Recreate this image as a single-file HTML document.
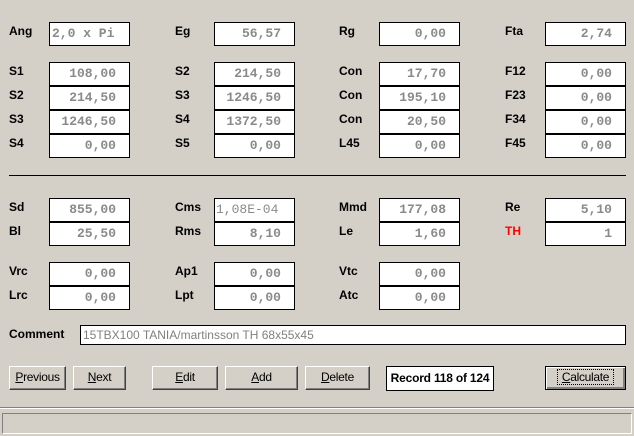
<!DOCTYPE html>
<html><head><style>
body{margin:0;width:634px;height:436px;background:#d4d0c8;position:relative;overflow:hidden;font-family:"Liberation Sans",sans-serif}
.l{position:absolute;font-weight:bold;font-size:12px;color:#000}
.b{position:absolute;box-sizing:border-box;width:81px;height:24px;background:#fff;border:1px solid #000;font-family:"Liberation Mono",monospace;font-size:13px;font-weight:bold;color:#8a8a8a;text-align:right;padding-right:13px;line-height:21px}
.btn{position:absolute;top:366px;height:24px;box-sizing:border-box;background:#d4d0c8;border:1px solid;border-color:#fff #404040 #404040 #fff;box-shadow:inset -1px -1px 0 #808080;font-size:12px;text-align:center;line-height:21px;letter-spacing:-0.3px}
</style></head><body>
<div class="l" style="left:9px;top:24px">Ang</div><div class="b" style="left:49px;top:22px;text-align:left;padding-left:2px">2,0 x Pi</div>
<div class="l" style="left:175px;top:24px">Eg</div><div class="b" style="left:214px;top:22px">56,57</div>
<div class="l" style="left:339px;top:24px">Rg</div><div class="b" style="left:379px;top:22px">0,00</div>
<div class="l" style="left:505px;top:24px">Fta</div><div class="b" style="left:545px;top:22px">2,74</div>

<div class="l" style="left:9px;top:64px">S1</div><div class="b" style="left:49px;top:62px">108,00</div>
<div class="l" style="left:9px;top:88px">S2</div><div class="b" style="left:49px;top:86px">214,50</div>
<div class="l" style="left:9px;top:112px">S3</div><div class="b" style="left:49px;top:110px">1246,50</div>
<div class="l" style="left:9px;top:136px">S4</div><div class="b" style="left:49px;top:134px">0,00</div>

<div class="l" style="left:175px;top:64px">S2</div><div class="b" style="left:214px;top:62px">214,50</div>
<div class="l" style="left:175px;top:88px">S3</div><div class="b" style="left:214px;top:86px">1246,50</div>
<div class="l" style="left:175px;top:112px">S4</div><div class="b" style="left:214px;top:110px">1372,50</div>
<div class="l" style="left:175px;top:136px">S5</div><div class="b" style="left:214px;top:134px">0,00</div>

<div class="l" style="left:339px;top:64px">Con</div><div class="b" style="left:379px;top:62px">17,70</div>
<div class="l" style="left:339px;top:88px">Con</div><div class="b" style="left:379px;top:86px">195,10</div>
<div class="l" style="left:339px;top:112px">Con</div><div class="b" style="left:379px;top:110px">20,50</div>
<div class="l" style="left:339px;top:136px">L45</div><div class="b" style="left:379px;top:134px">0,00</div>

<div class="l" style="left:505px;top:64px">F12</div><div class="b" style="left:545px;top:62px">0,00</div>
<div class="l" style="left:505px;top:88px">F23</div><div class="b" style="left:545px;top:86px">0,00</div>
<div class="l" style="left:505px;top:112px">F34</div><div class="b" style="left:545px;top:110px">0,00</div>
<div class="l" style="left:505px;top:136px">F45</div><div class="b" style="left:545px;top:134px">0,00</div>

<div style="position:absolute;left:9px;top:175px;width:617px;height:1px;background:#000"></div>

<div class="l" style="left:9px;top:200px">Sd</div><div class="b" style="left:49px;top:198px">855,00</div>
<div class="l" style="left:9px;top:224px">Bl</div><div class="b" style="left:49px;top:222px">25,50</div>
<div class="l" style="left:175px;top:200px">Cms</div><div class="b" style="left:214px;top:198px;text-align:left;padding-left:1px;font-weight:normal">1,08E-04</div>
<div class="l" style="left:175px;top:224px">Rms</div><div class="b" style="left:214px;top:222px">8,10</div>
<div class="l" style="left:339px;top:200px">Mmd</div><div class="b" style="left:379px;top:198px">177,08</div>
<div class="l" style="left:339px;top:224px">Le</div><div class="b" style="left:379px;top:222px">1,60</div>
<div class="l" style="left:505px;top:200px">Re</div><div class="b" style="left:545px;top:198px">5,10</div>
<div class="l" style="left:505px;top:224px;color:#f00">TH</div><div class="b" style="left:545px;top:222px">1</div>

<div class="l" style="left:9px;top:264px">Vrc</div><div class="b" style="left:49px;top:262px">0,00</div>
<div class="l" style="left:9px;top:288px">Lrc</div><div class="b" style="left:49px;top:286px">0,00</div>
<div class="l" style="left:175px;top:264px">Ap1</div><div class="b" style="left:214px;top:262px">0,00</div>
<div class="l" style="left:175px;top:288px">Lpt</div><div class="b" style="left:214px;top:286px">0,00</div>
<div class="l" style="left:339px;top:264px">Vtc</div><div class="b" style="left:379px;top:262px">0,00</div>
<div class="l" style="left:339px;top:288px">Atc</div><div class="b" style="left:379px;top:286px">0,00</div>

<div class="l" style="left:9px;top:327px">Comment</div>
<div style="position:absolute;left:80px;top:325px;width:546px;height:20px;box-sizing:border-box;border:1px solid #000;background:#fff;color:#808080;font-size:12px;line-height:18px;padding-left:2px">15TBX100 TANIA/martinsson TH 68x55x45</div>

<div class="btn" style="left:9px;width:57px"><u>P</u>revious</div>
<div class="btn" style="left:73px;width:53px"><u>N</u>ext</div>
<div class="btn" style="left:152px;width:66px"><u>E</u>dit</div>
<div class="btn" style="left:225px;width:73px"><u>A</u>dd</div>
<div class="btn" style="left:305px;width:65px"><u>D</u>elete</div>
<div style="position:absolute;left:386px;top:366px;width:108px;height:25px;box-sizing:border-box;border:1px solid #000;background:#fff;font-weight:bold;font-size:12px;letter-spacing:-0.2px;text-align:center;line-height:23px">Record 118 of 124</div>
<div class="btn" style="left:545px;width:81px;border:1px solid #000;box-shadow:inset 1px 1px 0 #fff,inset -2px -2px 0 #808080"><span style="border:1px dotted #000;padding:0 4px"><u>C</u>alculate</span></div>

<div style="position:absolute;left:0;top:407px;width:634px;height:1px;background:#808080"></div>
<div style="position:absolute;left:0;top:408px;width:634px;height:1px;background:#fff"></div>
<div style="position:absolute;left:2px;top:413px;width:630px;height:21px;box-sizing:border-box;border:1px solid;border-color:#808080 #fff #fff #808080"></div>
</body></html>
